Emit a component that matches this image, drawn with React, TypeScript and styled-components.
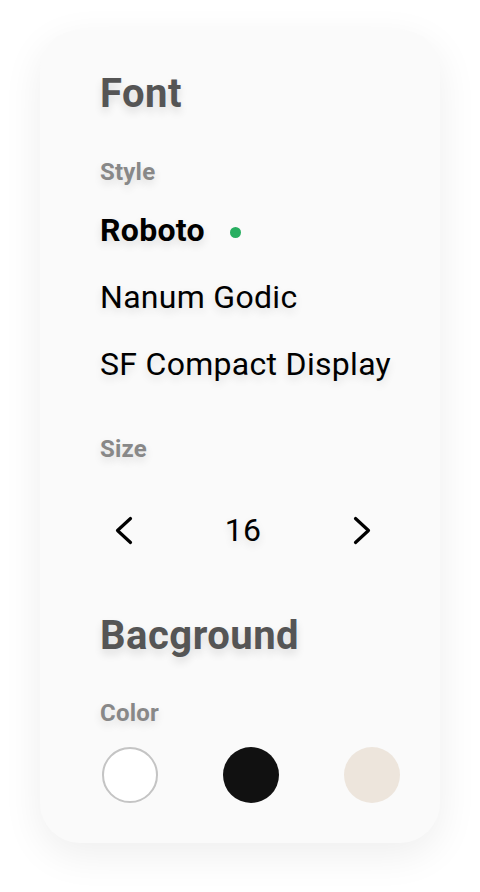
import React, { useState } from 'react';
import styled, { createGlobalStyle } from 'styled-components';

const GlobalStyle = createGlobalStyle`
  html, body {
    margin: 0;
    padding: 0;
    background: #ffffff;
  }
  body {
    font-family: Roboto, "Liberation Sans", sans-serif;
  }
`;

const Page = styled.div`
  padding: 30px 40px 49px;
`;

const Card = styled.div`
  width: 400px;
  box-sizing: border-box;
  padding: 40px 40px 40px 60px;
  border-radius: 40px;
  background: #fafafa;
  box-shadow: 0 12px 40px rgba(0, 0, 0, 0.07);
`;

const Title = styled.h2`
  margin: 0;
  font-size: 40px;
  line-height: 48px;
  font-weight: 700;
  letter-spacing: 0.5px;
  color: #555555;
  text-shadow: 0 5px 9px rgba(0, 0, 0, 0.12);
`;

const Label = styled.div<{ gap: number }>`
  margin-top: ${p => p.gap}px;
  font-size: 24px;
  line-height: 28px;
  font-weight: 700;
  letter-spacing: 0.2px;
  color: #888888;
  text-shadow: 0 4px 8px rgba(0, 0, 0, 0.12);
`;

const OptionList = styled.ul`
  list-style: none;
  margin: 10px 0 0;
  padding: 0;
`;

const Option = styled.li<{ active?: boolean }>`
  display: flex;
  align-items: center;
  gap: 25px;
  height: 67px;
  font-size: 32px;
  font-weight: ${p => (p.active ? 700 : 400)};
  letter-spacing: 0.3px;
  color: #000000;
  text-shadow: 0 4px 8px rgba(0, 0, 0, 0.12);
  cursor: pointer;
`;

const Dot = styled.span`
  width: 11px;
  height: 11px;
  margin-top: 5px;
  border-radius: 50%;
  background: #27ae60;
`;

const Stepper = styled.div`
  display: flex;
  align-items: center;
  justify-content: space-between;
  height: 60px;
  margin: 37px 0 52px;
  padding: 0 28px 0 14px;
`;

const Arrow = styled.button`
  display: flex;
  border: 0;
  padding: 0;
  background: none;
  cursor: pointer;
`;

const Value = styled.span`
  font-size: 32px;
  letter-spacing: 0.3px;
  color: #000000;
  text-shadow: 0 4px 8px rgba(0, 0, 0, 0.12);
`;

const Swatches = styled.div`
  display: flex;
  justify-content: space-between;
  margin-top: 20px;
  padding-left: 2px;
`;

const Swatch = styled.button<{ color: string; outlined?: boolean }>`
  width: 56px;
  height: 56px;
  padding: 0;
  border-radius: 50%;
  box-sizing: border-box;
  background: ${p => p.color};
  border: ${p => (p.outlined ? '2px solid #c4c4c4' : '0')};
  cursor: pointer;
`;

const fonts = ['Roboto', 'Nanum Godic', 'SF Compact Display'];

export default function App() {
  const [font, setFont] = useState('Roboto');
  const [size, setSize] = useState(16);

  return (
    <Page>
      <GlobalStyle />
      <Card>
        <Title>Font</Title>
        <Label gap={40}>Style</Label>
        <OptionList>
          {fonts.map(f => (
            <Option key={f} active={f === font} onClick={() => setFont(f)}>
              {f}
              {f === font && <Dot />}
            </Option>
          ))}
        </OptionList>
        <Label gap={38}>Size</Label>
        <Stepper>
          <Arrow onClick={() => setSize(size - 1)} aria-label="decrease">
            <svg width="20" height="33" viewBox="0 0 20 33">
              <path d="M16.5 4.5 L3.5 16.5 L16.5 28.5" fill="none" stroke="#000" strokeWidth="3.2" strokeLinecap="round" strokeLinejoin="round" />
            </svg>
          </Arrow>
          <Value>{size}</Value>
          <Arrow onClick={() => setSize(size + 1)} aria-label="increase">
            <svg width="20" height="33" viewBox="0 0 20 33">
              <path d="M3.5 4.5 L16.5 16.5 L3.5 28.5" fill="none" stroke="#000" strokeWidth="3.2" strokeLinecap="round" strokeLinejoin="round" />
            </svg>
          </Arrow>
        </Stepper>
        <Title>Bacground</Title>
        <Label gap={39}>Color</Label>
        <Swatches>
          <Swatch color="#ffffff" outlined aria-label="white" />
          <Swatch color="#111111" aria-label="black" />
          <Swatch color="#ede5dc" aria-label="beige" />
        </Swatches>
      </Card>
    </Page>
  );
}
